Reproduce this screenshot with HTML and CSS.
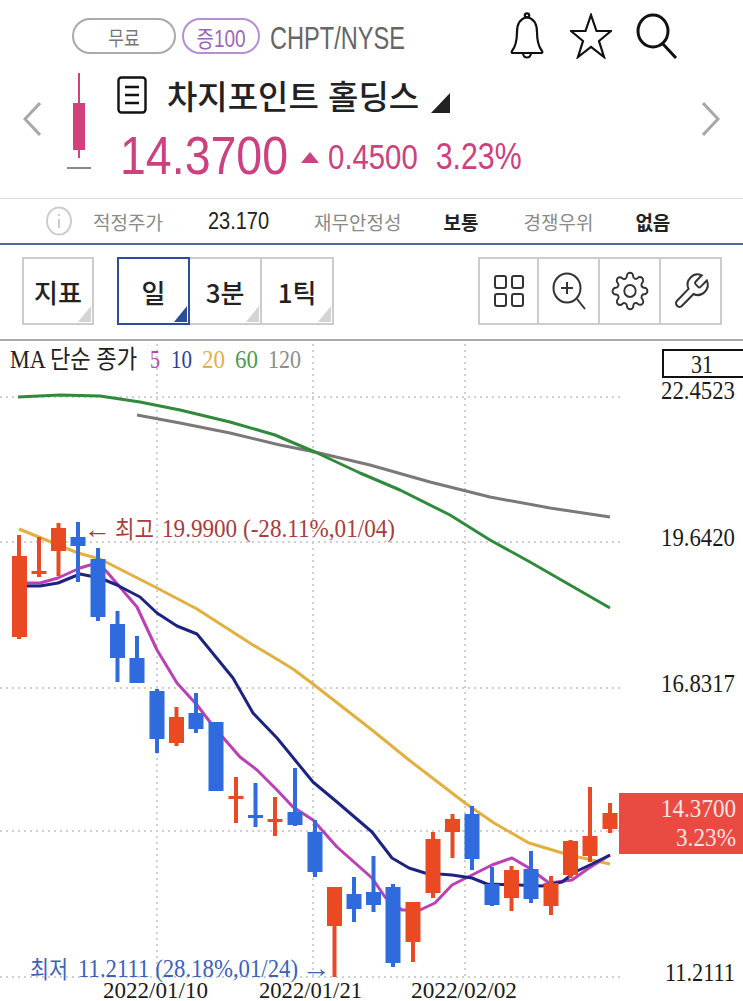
FILE: index.html
```html
<!DOCTYPE html>
<html lang="ko">

<head>
    <meta charset="UTF-8">
    <meta content="width=device-width, initial-scale=1.0" name="viewport">
    <title>차지포인트 홀딩스</title>
    <link rel="stylesheet" href="styles.css">
</head>

<body>
<div class="page">
    <header class="header">
        <div class="top-row">
            <span class="pill pill-free"><span class="tall">무료</span></span>
            <span class="pill pill-margin"><span class="tall">증100</span></span>
            <span class="ticker tall">CHPT/NYSE</span>
            <div class="top-icons">
                <svg class="icon-bell" viewBox="0 0 34 48" width="34" height="48">
                    <path d="M17 5C9 7 7 13 7 20c0 8-1 14-5 19-1 2 0 2 2 2h26c2 0 3 0 2-2-4-5-5-11-5-19 0-7-2-13-10-15z"/>
                    <circle cx="17" cy="3.5" r="2.2"/>
                    <path d="M13 41c0 6 8 6 8 0"/>
                </svg>
                <svg class="icon-star" viewBox="0 0 42 46" width="42" height="46">
                    <path d="M21 2l5.5 16H41L29 28l5 16-13-10-13 10 5-16L1 18h14.500z"/>
                </svg>
                <svg class="icon-search" viewBox="0 0 42 46" width="42" height="46">
                    <ellipse cx="17" cy="18" rx="15" ry="16"/>
                    <path d="M27 31l13 14"/>
                </svg>
            </div>
        </div>
        <div class="main-row">
            <svg class="chevron" viewBox="0 0 18 34" width="18" height="34"><path d="M17 1L2 17l15 16"/></svg>
            <svg class="mini-candle" viewBox="0 0 24 98" width="24" height="98">
                <path class="mini-body" d="M11 0h2v30h5v47h-5v8h-2v-8H6V30h5z"/>
                <path class="mini-base" d="M0 94h24v2H0z"/>
            </svg>
            <div class="quote">
                <div class="title-row">
                    <svg class="icon-doc" viewBox="0 0 30 38" width="30" height="38">
                        <rect x="1.500" y="1.500" width="27" height="35" rx="3"/>
                        <path d="M8 11h14M8 19h14M8 27h14"/>
                    </svg>
                    <span class="title">차지포인트 홀딩스</span>
                    <span class="title-arrow"></span>
                </div>
                <div class="price-row">
                    <span class="price tall">14.3700</span>
                    <span class="up-arrow"></span>
                    <span class="change tall">0.4500</span>
                    <span class="change tall">3.23%</span>
                </div>
            </div>
            <svg class="chevron chevron-right" viewBox="0 0 18 34" width="18" height="34"><path d="M1 1l15 16L1 33"/></svg>
        </div>
    </header>

    <div class="stats">
        <svg class="icon-info" viewBox="0 0 26 30" width="26" height="30">
            <ellipse cx="13" cy="15" rx="12" ry="13.500"/>
            <path d="M13 13v9M13 8v2"/>
        </svg>
        <span class="stat-label">적정주가</span>
        <span class="stat-value">23.170</span>
        <span class="stat-label">재무안정성</span>
        <span class="stat-value strong">보통</span>
        <span class="stat-label">경쟁우위</span>
        <span class="stat-value strong">없음</span>
    </div>

    <div class="toolbar">
        <button class="tool-btn has-corner">지표</button>
        <div class="tool-group">
            <button class="tool-btn has-corner active">일</button>
            <button class="tool-btn has-corner">3분</button>
            <button class="tool-btn has-corner">1틱</button>
        </div>
        <div class="tool-group tool-icons">
            <button class="tool-btn">
                <svg viewBox="0 0 32 34" width="32" height="34">
                    <rect x="2" y="2" width="11" height="12" rx="2"/>
                    <rect x="19" y="2" width="11" height="12" rx="2"/>
                    <rect x="2" y="20" width="11" height="12" rx="2"/>
                    <rect x="19" y="20" width="11" height="12" rx="2"/>
                </svg>
            </button>
            <button class="tool-btn">
                <svg viewBox="0 0 34 38" width="34" height="38">
                    <ellipse cx="15" cy="16" rx="13.500" ry="14.500"/>
                    <path d="M25 27l8 10M15 10v12M9 16h12"/>
                </svg>
            </button>
            <button class="tool-btn">
                <svg viewBox="0 0 24 24" width="38" height="40" preserveAspectRatio="none">
                    <circle cx="12" cy="12" r="3.600"/>
                    <path d="M19.400 15a1.650 1.650 0 0 0 .33 1.820l.06.06a2 2 0 0 1 0 2.830 2 2 0 0 1-2.830 0l-.06-.06a1.650 1.650 0 0 0-1.820-.33 1.650 1.650 0 0 0-1 1.510V21a2 2 0 0 1-2 2 2 2 0 0 1-2-2v-.09A1.650 1.650 0 0 0 9 19.400a1.650 1.650 0 0 0-1.820.33l-.06.06a2 2 0 0 1-2.830 0 2 2 0 0 1 0-2.830l.06-.06a1.650 1.650 0 0 0 .33-1.820 1.650 1.650 0 0 0-1.510-1H3a2 2 0 0 1-2-2 2 2 0 0 1 2-2h.09A1.650 1.650 0 0 0 4.600 9a1.650 1.650 0 0 0-.33-1.820l-.06-.06a2 2 0 0 1 0-2.830 2 2 0 0 1 2.830 0l.06.06a1.650 1.650 0 0 0 1.820.33H9a1.650 1.650 0 0 0 1-1.510V3a2 2 0 0 1 2-2 2 2 0 0 1 2 2v.09a1.650 1.650 0 0 0 1 1.510 1.650 1.650 0 0 0 1.820-.33l.06-.06a2 2 0 0 1 2.830 0 2 2 0 0 1 0 2.830l-.06.06a1.650 1.650 0 0 0-.33 1.820V9a1.650 1.650 0 0 0 1.510 1H21a2 2 0 0 1 2 2 2 2 0 0 1-2 2h-.09a1.650 1.650 0 0 0-1.510 1z"/>
                </svg>
            </button>
            <button class="tool-btn">
                <svg viewBox="0 0 24 24" width="40" height="41" preserveAspectRatio="none">
                    <path d="M14.700 6.300a1 1 0 0 0 0 1.400l1.600 1.600a1 1 0 0 0 1.400 0l3.770-3.770a6 6 0 0 1-7.940 7.940l-6.910 6.910a2.120 2.120 0 0 1-3-3l6.910-6.910a6 6 0 0 1 7.940-7.940l-3.760 3.760z"/>
                </svg>
            </button>
        </div>
    </div>

    <!-- chart uses page coordinates, so the viewBox starts at the toolbar's bottom edge -->
    <svg class="chart" viewBox="0 341 743 660" width="743" height="660">
        <g class="grid">
            <path d="M0 397H620M0 542H620M0 688H620M0 831H620M0 977H620"/>
            <path d="M157 344V977M313 344V977M465 344V977"/>
        </g>

        <g class="legend">
            <text x="10" y="368" textLength="127" lengthAdjust="spacingAndGlyphs">MA 단순 종가</text>
            <text class="c-ma5" x="150" y="368" textLength="10" lengthAdjust="spacingAndGlyphs">5</text>
            <text class="c-ma10" x="171" y="368" textLength="21" lengthAdjust="spacingAndGlyphs">10</text>
            <text class="c-ma20" x="202" y="368" textLength="23" lengthAdjust="spacingAndGlyphs">20</text>
            <text class="c-ma60" x="235" y="368" textLength="23" lengthAdjust="spacingAndGlyphs">60</text>
            <text class="c-ma120" x="268" y="368" textLength="33" lengthAdjust="spacingAndGlyphs">120</text>
        </g>

        <path class="line ma120" d="M137 415L180 423 230 433 280 445 315 452 370 465 430 482 490 497 550 508 610 517"/>
        <path class="line ma60" d="M18 397L60 395 100 396 140 402 180 410 230 422 275 435 315 452 360 473 400 490 450 515 490 540 530 562 570 585 610 608"/>
        <path class="line ma20" d="M19 529L78 553 100 559 157 588 197 609 253 645 275 658 293 669 313 684 372 730 409 760 465 803 494 823 529 843 569 855 610 864"/>
        <path class="line ma5" d="M27 583L40 583 58 578 80 568 90 565 100 565 107 572 137 607 157 650 177 683 197 705 213 726 240 757 257 770 277 790 293 807 313 820 337 847 372 878 385 897 402 910 420 910 435 903 452 885 472 875 492 865 512 858 529 868 549 883 572 880 589 868 610 855"/>
        <path class="line ma10" d="M27 586L40 586 58 583 80 574 100 578 117 585 140 597 157 613 177 626 197 634 233 678 253 713 277 738 295 760 313 782 337 802 372 832 392 858 409 868 425 873 452 875 472 878 487 884 519 885 542 886 562 882 575 872 592 864 610 855"/>

        <g class="candles-red">
            <path d="M17 535h4v104h-4zM12 556h15v81H12z"/>
            <path d="M37 537h4v40h-4zM31.500 571h15v3h-15z"/>
            <path d="M56.500 523h4v53h-4zM51 528h15v23H51z"/>
            <path d="M174.500 707h4v39h-4zM169 717h15v26h-15z"/>
            <path d="M234 777h4v46h-4zM228.500 796h15v3h-15z"/>
            <path d="M273 797h4v39h-4zM267.500 819h15v3h-15z"/>
            <path d="M332.500 887h4v90h-4zM327 887h15v39h-15z"/>
            <path d="M411 902h4v60h-4zM405.500 902h15v40h-15z"/>
            <path d="M431 832h4v66h-4zM425.500 839h15v54h-15z"/>
            <path d="M450.500 814h4v44h-4zM445 819h15v13h-15z"/>
            <path d="M509.500 866h4v45h-4zM504 870h15v28h-15z"/>
            <path d="M549 876h4v39h-4zM543.500 883h15v23h-15z"/>
            <path d="M568.500 840h4v38h-4zM563 841h15v34h-15z"/>
            <path d="M588 787h4v75h-4zM582.500 836h15v20h-15z"/>
            <path d="M608 803h4v30h-4zM602.500 813h15v16h-15z"/>
        </g>
        <g class="candles-blue">
            <path d="M76 522h4v60h-4zM70.500 537h15v9h-15z"/>
            <path d="M96 548h4v73h-4zM90.500 559h15v58h-15z"/>
            <path d="M115.500 611h4v71h-4zM110 624h15v34h-15z"/>
            <path d="M135 636h4v47h-4zM129.500 658h15v25h-15z"/>
            <path d="M155 689h4v64h-4zM149.500 691h15v48h-15z"/>
            <path d="M194 693h4v40h-4zM188.500 713h15v16h-15z"/>
            <path d="M214 722h4v69h-4zM208.500 722h15v69h-15z"/>
            <path d="M253.500 783h4v44h-4zM248 815h15v3h-15z"/>
            <path d="M293 768h4v58h-4zM287.500 812h15v13h-15z"/>
            <path d="M313 820h4v57h-4zM307.500 832h15v40h-15z"/>
            <path d="M352 877h4v45h-4zM346.500 894h15v15h-15z"/>
            <path d="M371.500 856h4v56h-4zM366 892h15v13h-15z"/>
            <path d="M391 884h4v83h-4zM385.500 887h15v76h-15z"/>
            <path d="M470 806h4v64h-4zM464.500 814h15v45h-15z"/>
            <path d="M490 867h4v39h-4zM484.500 884h15v21h-15z"/>
            <path d="M529 851h4v52h-4zM523.500 869h15v30h-15z"/>
        </g>

        <g class="note-high">
            <text x="84" y="538" textLength="27" lengthAdjust="spacingAndGlyphs">←</text>
            <text class="note-ko" x="115" y="538" textLength="39" lengthAdjust="spacingAndGlyphs">최고</text>
            <text x="162" y="537" textLength="233" lengthAdjust="spacingAndGlyphs">19.9900 (-28.11%,01/04)</text>
        </g>
        <g class="note-low">
            <text class="note-ko" x="30" y="978" textLength="38" lengthAdjust="spacingAndGlyphs">최저</text>
            <text x="78" y="977" textLength="220" lengthAdjust="spacingAndGlyphs">11.2111 (28.18%,01/24)</text>
            <text x="302" y="977" textLength="29" lengthAdjust="spacingAndGlyphs">→</text>
        </g>

        <g class="axis">
            <path class="axis-box" d="M743 350H663V377H743"/>
            <text x="691" y="373" textLength="22" lengthAdjust="spacingAndGlyphs">31</text>
            <text x="661" y="399" textLength="74" lengthAdjust="spacingAndGlyphs">22.4523</text>
            <text x="661" y="546" textLength="74" lengthAdjust="spacingAndGlyphs">19.6420</text>
            <text x="661" y="692" textLength="74" lengthAdjust="spacingAndGlyphs">16.8317</text>
            <text x="665" y="981" textLength="70" lengthAdjust="spacingAndGlyphs">11.2111</text>
        </g>

        <g class="dates">
            <text x="103" y="998" textLength="105" lengthAdjust="spacingAndGlyphs">2022/01/10</text>
            <text x="259" y="998" textLength="103" lengthAdjust="spacingAndGlyphs">2022/01/21</text>
            <text x="411" y="998" textLength="106" lengthAdjust="spacingAndGlyphs">2022/02/02</text>
        </g>

        <rect class="last-box" x="619" y="793" width="124" height="61"/>
        <text class="last-text" x="661" y="817" textLength="75" lengthAdjust="spacingAndGlyphs">14.3700</text>
        <text class="last-text" x="676" y="846" textLength="60" lengthAdjust="spacingAndGlyphs">3.23%</text>
    </svg>
</div>
</body>

</html>
```

FILE: styles.css
```css
html, body {
    width: 100%;
    height: 100%;
    margin: 0;
    padding: 0;
    overflow: hidden;
    background: #fff;
}

.page {
    display: flex;
    flex-direction: column;
    width: 743px;
    height: 1001px;
    font-family: "Noto Sans CJK KR", "Liberation Sans", sans-serif;
}

/* the screenshot is stretched vertically, text follows it */
.tall {
    display: inline-block;
    transform: scaleY(1.22);
}

.header {
    height: 198px;
}

.top-row {
    display: flex;
    align-items: center;
    height: 72px;
    padding-left: 72px;
}

.pill {
    display: flex;
    align-items: center;
    justify-content: center;
    box-sizing: border-box;
    height: 36px;
    border-radius: 18px;
    font-size: 17px;
}

.pill-free {
    width: 104px;
    border: 2px solid #aaa;
    color: #777;
}

.pill-margin {
    width: 78px;
    margin-left: 6px;
    border: 2px solid #b68fd2;
    color: #9a68bb;
    font-family: "Liberation Sans", "Noto Sans CJK KR", sans-serif;
    font-size: 19px;
}

.ticker {
    margin: 6px 0 0 10px;
    font-family: "Liberation Sans", sans-serif;
    font-size: 23.6px;
    color: #666;
    transform: scaleY(1.3);
}

.top-icons {
    display: flex;
    align-items: center;
    margin-left: 105px;
    fill: none;
    stroke: #111;
    stroke-width: 2.2;
}

.icon-star {
    margin-left: 26px;
}

.icon-search {
    margin-left: 24px;
    stroke-width: 3;
}

.main-row {
    display: flex;
    align-items: flex-start;
}

.chevron {
    flex: none;
    margin: 30px 0 0 23px;
    fill: none;
    stroke: #a8a8a8;
    stroke-width: 3;
}

.chevron-right {
    margin-left: auto;
    margin-right: 23px;
}

.mini-candle {
    flex: none;
    margin: 1px 0 0 26px;
}

.mini-body {
    fill: #d2417c;
}

.mini-base {
    fill: #888;
}

.quote {
    margin-left: 26px;
}

.title-row {
    display: flex;
    align-items: center;
    height: 46px;
}

.icon-doc {
    flex: none;
    fill: none;
    stroke: #111;
    stroke-width: 2.4;
}

.title {
    margin-left: 20px;
    font-size: 33px;
    font-weight: 500;
    line-height: 46px;
    color: #222;
    white-space: nowrap;
}

.title-arrow {
    width: 0;
    height: 0;
    margin: 16px 0 0 12px;
    border-style: solid;
    border-width: 0 0 20px 19px;
    border-color: transparent transparent #222 transparent;
}

.price-row {
    display: flex;
    align-items: center;
    height: 72px;
    margin-left: 3px;
    color: #cc4180;
    font-family: "Liberation Sans", sans-serif;
    white-space: nowrap;
}

.price {
    margin-top: 2px;
    font-size: 46.5px;
    line-height: 72px;
    transform: scaleY(1.16);
}

.up-arrow {
    width: 0;
    height: 0;
    margin: 6px 0 0 13px;
    border-style: solid;
    border-width: 0 9px 11px 9px;
    border-color: transparent transparent #cc4180 transparent;
}

.change {
    margin: 6px 0 0 9px;
    font-size: 29.3px;
}

.change + .change {
    margin-left: 18px;
    font-size: 30.300px;
}

.stats {
    display: flex;
    align-items: center;
    box-sizing: border-box;
    height: 47px;
    padding-left: 46px;
    gap: 45px;
    border-top: 1px solid #ddd;
    border-bottom: 2px solid #4d6b96;
    font-size: 19px;
    white-space: nowrap;
}

.icon-info {
    flex: none;
    margin-right: -24px;
    fill: none;
    stroke: #ccc;
    stroke-width: 2;
}

.stat-label {
    color: #8a8a8a;
}

.stat-value {
    display: inline-block;
    font-family: "Liberation Sans", "Noto Sans CJK KR", sans-serif;
    font-size: 20px;
    color: #222;
    transform: scaleY(1.15);
}

.stat-value.strong {
    margin-left: -3px;
    font-family: "Noto Sans CJK KR", sans-serif;
    font-size: 19px;
    font-weight: 700;
    transform: none;
}

.toolbar {
    display: flex;
    align-items: flex-start;
    box-sizing: border-box;
    height: 96px;
    padding: 12px 21px 0 22px;
    border-bottom: 2px solid #aaa;
}

.tool-group {
    display: flex;
    margin-left: 23px;
}

.tool-icons {
    margin-left: auto;
}

.tool-btn {
    position: relative;
    display: flex;
    align-items: center;
    justify-content: center;
    box-sizing: border-box;
    width: 72px;
    height: 68px;
    padding: 0;
    border: 2px solid #ccc;
    background: #fff;
    font-family: "Noto Sans CJK KR", sans-serif;
    font-size: 26px;
    font-weight: 500;
    color: #222;
}

.tool-group .tool-btn + .tool-btn {
    margin-left: -2px;
    width: 74px;
}

.tool-btn.active {
    z-index: 1;
    width: 73px;
    border-color: #2c4c9c;
}

.has-corner::after {
    content: "";
    position: absolute;
    right: 1px;
    bottom: 1px;
    border-style: solid;
    border-width: 0 0 16px 13px;
    border-color: transparent transparent #d4d4d4 transparent;
}

.has-corner.active::after {
    border-bottom-color: #2c4c9c;
}

.tool-icons .tool-btn {
    width: 61px;
    fill: none;
    stroke: #333;
    stroke-width: 2;
}

.tool-icons .tool-btn + .tool-btn {
    width: 63px;
}

.tool-icons .tool-btn:nth-child(n+3) svg {
    stroke-width: 1.2;
}

.chart {
    display: block;
    flex: none;
    font-family: "Liberation Serif", "Noto Sans CJK KR", serif;
    font-size: 26px;
}

.grid {
    fill: none;
    stroke: #cfcfcf;
    stroke-width: 2;
    stroke-dasharray: 2 4;
}

.legend {
    font-size: 25px;
    fill: #222;
}

.c-ma5 { fill: #c33fb5; }
.c-ma10 { fill: #2b3f9a; }
.c-ma20 { fill: #e5b044; }
.c-ma60 { fill: #4c9a4f; }
.c-ma120 { fill: #8d8d8d; }

.line {
    fill: none;
    stroke-width: 3;
    stroke-linejoin: round;
}

.ma5 { stroke: #bd3fb5; }
.ma10 { stroke: #1c2383; }
.ma20 { stroke: #e3b03f; }
.ma60 { stroke: #2f8a3c; }
.ma120 { stroke: #7c7878; }

.candles-red {
    fill: #ea4a22;
}

.candles-blue {
    fill: #2f6bdc;
}

.note-high {
    fill: #a83c3c;
}

.note-low {
    fill: #3a62b8;
}

.note-ko {
    font-size: 24px;
}

.axis {
    font-size: 24.800px;
    fill: #1a1a1a;
}

.dates {
    font-size: 24px;
    fill: #1a1a1a;
}

.axis-box {
    fill: none;
    stroke: #111;
    stroke-width: 2;
}

.last-box {
    fill: #e94b42;
}

.last-text {
    font-size: 24.800px;
    fill: #fbe6e3;
}
```
